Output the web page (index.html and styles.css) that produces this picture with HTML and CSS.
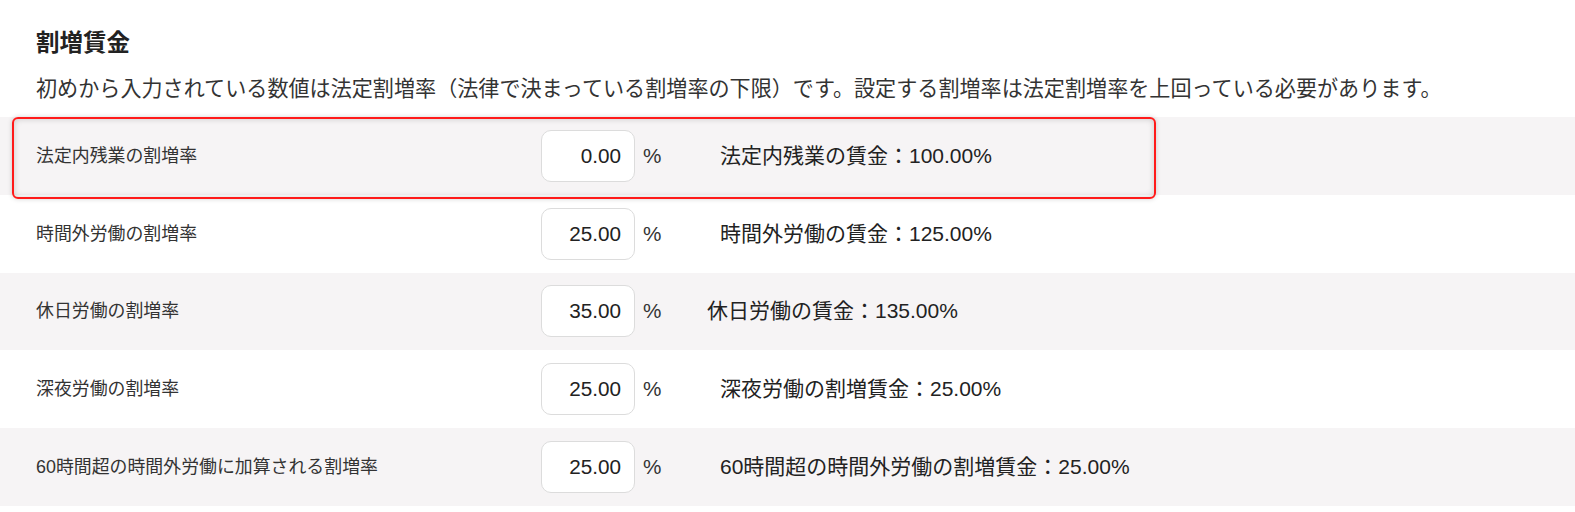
FILE: index.html
```html
<!DOCTYPE html>
<html lang="ja">
<head>
<meta charset="utf-8">
<title>割増賃金</title>
<link rel="stylesheet" href="styles.css">
</head>
<body>
<main class="page">
  <h2 class="title">割増賃金</h2>
  <p class="desc">初めから入力されている数値は法定割増率（法律で決まっている割増率の下限）です。設定する割増率は法定割増率を上回っている必要があります。</p>
  <div class="rows">
    <div class="row row--alt row--highlight">
      <div class="label">法定内残業の割増率</div>
      <div class="field"><input class="rate" type="text" value="0.00"><span class="unit">%</span></div>
      <div class="result">法定内残業の賃金：100.00%</div>
    </div>
    <div class="row">
      <div class="label">時間外労働の割増率</div>
      <div class="field"><input class="rate" type="text" value="25.00"><span class="unit">%</span></div>
      <div class="result">時間外労働の賃金：125.00%</div>
    </div>
    <div class="row row--alt">
      <div class="label">休日労働の割増率</div>
      <div class="field"><input class="rate" type="text" value="35.00"><span class="unit">%</span></div>
      <div class="result result--shift">休日労働の賃金：135.00%</div>
    </div>
    <div class="row">
      <div class="label">深夜労働の割増率</div>
      <div class="field"><input class="rate" type="text" value="25.00"><span class="unit">%</span></div>
      <div class="result">深夜労働の割増賃金：25.00%</div>
    </div>
    <div class="row row--alt">
      <div class="label">60時間超の時間外労働に加算される割増率</div>
      <div class="field"><input class="rate" type="text" value="25.00"><span class="unit">%</span></div>
      <div class="result">60時間超の時間外労働の割増賃金：25.00%</div>
    </div>
  </div>
</main>
</body>
</html>
```

FILE: styles.css
```css
* { box-sizing: border-box; }

html, body {
  margin: 0;
  padding: 0;
  background: #ffffff;
}

body {
  font-family: "Liberation Sans", "Noto Sans CJK JP", sans-serif;
  color: #333333;
}

.page {
  padding-top: 26px;
}

.title {
  margin: 0 0 12px;
  padding-left: 36px;
  font-size: 23.5px;
  line-height: 34px;
  font-weight: 700;
  color: #222222;
}

.desc {
  margin: 0 0 14px;
  padding-left: 36px;
  font-size: 21.1px;
  line-height: 33px;
  color: #333333;
  white-space: nowrap;
}

.rows {
  display: flex;
  flex-direction: column;
  margin-top: -2px;
}

.row {
  position: relative;
  display: grid;
  grid-template-columns: 505px 179px 1fr;
  align-items: center;
  height: 77.8px;
  padding-left: 36px;
  background: #ffffff;
}

.row--alt {
  background: #f6f4f5;
}

.row--highlight {
  z-index: 2;
}

.row--highlight::after {
  content: "";
  position: absolute;
  left: 12px;
  top: 0;
  width: 1140px;
  height: 78px;
  border: 2px solid #ff1a1a;
  border-radius: 6px;
  box-shadow: inset 0 0 6px rgba(0, 0, 0, 0.18), 0 0 5px rgba(0, 0, 0, 0.18);
  pointer-events: none;
}

.label {
  font-size: 17.9px;
  line-height: 24px;
  color: #333333;
  white-space: nowrap;
}

.field {
  display: flex;
  align-items: center;
}

.rate {
  width: 94px;
  height: 52px;
  padding: 0 13px 0 8px;
  border: 1px solid #dcdcdc;
  border-radius: 10px;
  background: #ffffff;
  font-family: "Liberation Sans", "Noto Sans CJK JP", sans-serif;
  font-size: 20.7px;
  color: #222222;
  text-align: right;
  outline: none;
}

.unit {
  margin-left: 8px;
  font-size: 20.7px;
  color: #333333;
}

.result {
  font-size: 21px;
  line-height: 28px;
  color: #222222;
  white-space: nowrap;
}

.result--shift {
  margin-left: -13px;
}
```
